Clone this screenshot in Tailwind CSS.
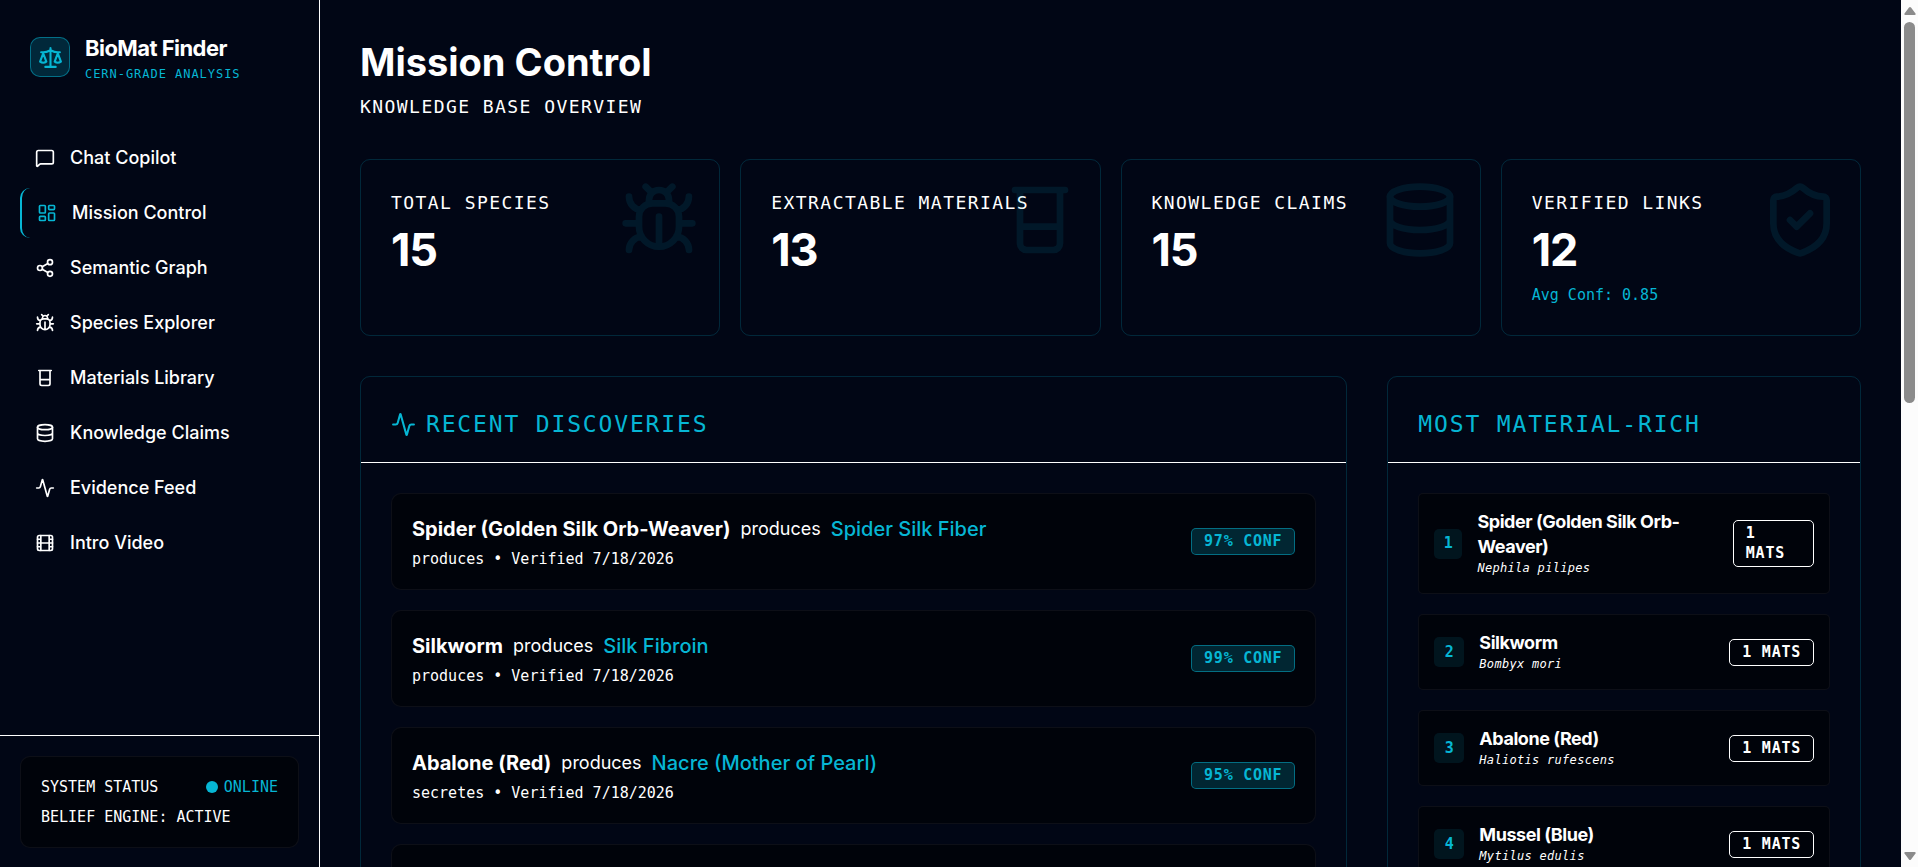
<!DOCTYPE html>
<html lang="en">
<head>
    <meta charset="UTF-8">
    <meta name="viewport" content="width=device-width, initial-scale=1.0">
    <title>BioMat Finder - Mission Control</title>
    <script src="https://cdn.jsdelivr.net/npm/@tailwindcss/browser@4"></script>
</head>
<body class="bg-[#010615] text-white font-['Inter',sans-serif] h-screen overflow-hidden flex">
    <!-- Icon sprite -->
    <svg class="hidden" aria-hidden="true">
        <symbol id="i-scale" viewBox="0 0 24 24"><path d="m16 16 3-8 3 8c-.87.65-1.92 1-3 1s-2.13-.35-3-1Z"/><path d="m2 16 3-8 3 8c-.87.65-1.92 1-3 1s-2.13-.35-3-1Z"/><path d="M7 21h10M12 3v18M3 7h2c2 0 5-1 7-2 2 1 5 2 7 2h2"/></symbol>
        <symbol id="i-chat" viewBox="0 0 24 24"><path d="M22 17a2 2 0 0 1-2 2H6.828a2 2 0 0 0-1.414.586l-2.202 2.202A.71.71 0 0 1 2 21.286V5a2 2 0 0 1 2-2h16a2 2 0 0 1 2 2z"/></symbol>
        <symbol id="i-dashboard" viewBox="0 0 24 24"><rect width="7" height="9" x="3" y="3" rx="1"/><rect width="7" height="5" x="14" y="3" rx="1"/><rect width="7" height="9" x="14" y="12" rx="1"/><rect width="7" height="5" x="3" y="16" rx="1"/></symbol>
        <symbol id="i-share" viewBox="0 0 24 24"><circle cx="18" cy="5" r="3"/><circle cx="6" cy="12" r="3"/><circle cx="18" cy="19" r="3"/><path d="m8.59 13.51 6.83 3.98M15.41 6.51l-6.82 3.98"/></symbol>
        <symbol id="i-bug" viewBox="0 0 24 24"><path d="m8 2 1.88 1.88M14.12 3.88 16 2M9 7.13v-1a3.003 3.003 0 1 1 6 0v1"/><path d="M12 20c-3.3 0-6-2.7-6-6v-3a4 4 0 0 1 4-4h4a4 4 0 0 1 4 4v3c0 3.3-2.7 6-6 6M12 20v-9M6.53 9C4.6 8.8 3 7.1 3 5M6 13H2M3 21c0-2.1 1.7-3.9 3.8-4M20.97 5c0 2.1-1.6 3.8-3.5 4M22 13h-4M17.2 17c2.1.1 3.8 1.9 3.8 4"/></symbol>
        <symbol id="i-beaker" viewBox="0 0 24 24"><path d="M4.5 3h15M6 3v16a2 2 0 0 0 2 2h8a2 2 0 0 0 2-2V3M6 14h12"/></symbol>
        <symbol id="i-database" viewBox="0 0 24 24"><ellipse cx="12" cy="5" rx="9" ry="3"/><path d="M3 5v14a9 3 0 0 0 18 0V5M3 12a9 3 0 0 0 18 0"/></symbol>
        <symbol id="i-activity" viewBox="0 0 24 24"><path d="M22 12h-2.48a2 2 0 0 0-1.93 1.46l-2.35 8.36a.25.25 0 0 1-.48 0L9.24 2.18a.25.25 0 0 0-.48 0l-2.35 8.36A2 2 0 0 1 4.49 12H2"/></symbol>
        <symbol id="i-film" viewBox="0 0 24 24"><rect width="18" height="18" x="3" y="3" rx="2"/><path d="M7 3v18M3 7.5h4M3 12h18M3 16.5h4M17 3v18M17 7.5h4M17 16.5h4"/></symbol>
        <symbol id="i-shield" viewBox="0 0 24 24"><path d="M20 13c0 5-3.5 7.5-7.66 8.95a1 1 0 0 1-.67-.01C7.5 20.5 4 18 4 13V6a1 1 0 0 1 1-1c2 0 4.5-1.2 6.24-2.72a1.17 1.17 0 0 1 1.52 0C14.51 3.81 17 5 19 5a1 1 0 0 1 1 1z"/><path d="m9 12 2 2 4-4"/></symbol>
    </svg>

    <!-- Sidebar -->
    <aside class="w-80 shrink-0 border-r border-white flex flex-col">
        <div class="flex items-center gap-[15px] px-[30px] pt-[30px]">
            <div class="size-10 rounded-[10px] bg-[#06b6d4]/20 border border-[#06b6d4]/50 text-[#06b6d4] flex items-center justify-center">
                <svg class="size-[25px] fill-none stroke-current stroke-2 [stroke-linecap:round] [stroke-linejoin:round]"><use href="#i-scale"/></svg>
            </div>
            <div class="pt-0.5">
                <div class="text-[22px] leading-8 font-bold tracking-tight">BioMat Finder</div>
                <div class="font-['DejaVu_Sans_Mono',monospace] text-xs leading-5 tracking-[0.08em] text-[#06b6d4]">CERN-GRADE ANALYSIS</div>
            </div>
        </div>

        <nav id="nav" class="flex-1 mt-[49px] px-5 space-y-[5px] text-lg font-medium"></nav>

        <div class="border-t border-white px-5 pt-5 pb-[19px]">
            <div class="bg-black/50 border border-white/5 rounded-[10px] p-5 space-y-2.5 font-['DejaVu_Sans_Mono',monospace] text-[15px] leading-5">
                <div class="flex items-center justify-between">
                    <span>SYSTEM STATUS</span>
                    <span class="flex items-center gap-1.5 text-[#06b6d4]">
                        <span class="size-3 rounded-full bg-[#06b6d4]"></span>ONLINE
                    </span>
                </div>
                <div>BELIEF ENGINE: ACTIVE</div>
            </div>
        </div>
    </aside>

    <!-- Main content -->
    <main class="flex-1 min-w-0 overflow-hidden p-10">
        <header class="mb-10">
            <h1 class="text-[38px] leading-11 font-bold">Mission Control</h1>
            <p class="mt-2.5 font-['DejaVu_Sans_Mono',monospace] text-lg leading-[25px] tracking-[0.08em]">KNOWLEDGE BASE OVERVIEW</p>
        </header>

        <section id="stats" class="grid grid-cols-4 gap-5 mb-10"></section>

        <div class="grid grid-cols-3 gap-10">
            <section class="col-span-2 border border-[#06b6d4]/20 rounded-[10px]">
                <h2 class="flex items-center gap-2.5 px-[30px] pt-[30px] pb-5 border-b border-white font-['DejaVu_Sans_Mono',monospace] text-[23px] leading-[35px] tracking-[0.08em] text-[#06b6d4]">
                    <svg class="size-[25px] fill-none stroke-current stroke-2 [stroke-linecap:round] [stroke-linejoin:round]"><use href="#i-activity"/></svg>
                    RECENT DISCOVERIES
                </h2>
                <div id="discoveries" class="p-[30px] space-y-5"></div>
            </section>

            <section class="border border-[#06b6d4]/20 rounded-[10px]">
                <h2 class="px-[30px] pt-[30px] pb-5 border-b border-white font-['DejaVu_Sans_Mono',monospace] text-[23px] leading-[35px] tracking-[0.08em] text-[#06b6d4]">MOST MATERIAL-RICH</h2>
                <div id="rich" class="p-[30px] space-y-5"></div>
            </section>
        </div>
    </main>

    <!-- Scroll track -->
    <div class="w-[17px] shrink-0 bg-[#fcfcfc] flex flex-col items-center justify-between py-1.5" aria-hidden="true">
        <svg class="w-3 h-2.5 fill-[#8b8b8b]" viewBox="0 0 12 10"><path d="M5 1.5q1-1.2 2 0l4.5 6q.6 1.500-1 1.500h-9q-1.600 0-1-1.500z"/></svg>
        <div class="w-[11px] flex-1 mt-1.5 mb-[448px] rounded-full bg-[#8b8b8b]"></div>
        <svg class="w-3 h-2.5 fill-[#8b8b8b] rotate-180" viewBox="0 0 12 10"><path d="M5 1.5q1-1.2 2 0l4.5 6q.6 1.500-1 1.500h-9q-1.600 0-1-1.500z"/></svg>
    </div>

    <script>
        const navItems = [
            ['chat', 'Chat Copilot'],
            ['dashboard', 'Mission Control'],
            ['share', 'Semantic Graph'],
            ['bug', 'Species Explorer'],
            ['beaker', 'Materials Library'],
            ['database', 'Knowledge Claims'],
            ['activity', 'Evidence Feed'],
            ['film', 'Intro Video']
        ]
        const stats = [
            { label: 'TOTAL SPECIES', value: 15, icon: 'bug' },
            { label: 'EXTRACTABLE MATERIALS', value: 13, icon: 'beaker' },
            { label: 'KNOWLEDGE CLAIMS', value: 15, icon: 'database' },
            { label: 'VERIFIED LINKS', value: 12, icon: 'shield', note: 'Avg Conf: 0.85' }
        ]
        const discoveries = [
            { species: 'Spider (Golden Silk Orb-Weaver)', material: 'Spider Silk Fiber', relation: 'produces', conf: 97 },
            { species: 'Silkworm', material: 'Silk Fibroin', relation: 'produces', conf: 99 },
            { species: 'Abalone (Red)', material: 'Nacre (Mother of Pearl)', relation: 'secretes', conf: 95 },
            { species: 'Mussel (Blue)', material: 'Byssal Threads', relation: 'secretes', conf: 94 }
        ]
        const rich = [
            ['Spider (Golden Silk Orb-Weaver)', 'Nephila pilipes'],
            ['Silkworm', 'Bombyx mori'],
            ['Abalone (Red)', 'Haliotis rufescens'],
            ['Mussel (Blue)', 'Mytilus edulis']
        ]

        function icon(name, cls) {
            return `<svg class="${cls} shrink-0 fill-none stroke-current stroke-2 [stroke-linecap:round] [stroke-linejoin:round]"><use href="#i-${name}"/></svg>`
        }

        document.getElementById('nav').innerHTML = navItems.map(([name, label]) => {
            const active = name === 'dashboard'
            return `
                <a href="#${name}" class="flex items-center gap-[15px] h-[50px] px-[15px] rounded-[10px]
                       ${active ? 'border-l-2 border-[#06b6d4]' : ''}">
                    ${icon(name, active ? 'size-5 text-[#06b6d4]' : 'size-5')}
                    ${label}
                </a>`
        }).join('')

        document.getElementById('stats').innerHTML = stats.map(s => `
            <div class="relative border border-[#06b6d4]/20 rounded-[10px] p-[30px]">
                <div class="font-['DejaVu_Sans_Mono',monospace] text-lg leading-[26px] tracking-[0.08em] whitespace-nowrap">${s.label}</div>
                <div class="mt-[11px] text-[45px] leading-[45px] font-bold tracking-tight">${s.value}</div>
                ${s.note ? `<div class="mt-[13px] font-['DejaVu_Sans_Mono',monospace] text-[15px] leading-5 text-[#06b6d4]">${s.note}</div>` : ''}
                ${icon(s.icon, 'absolute top-5 right-5 size-20 text-[#06b6d4] opacity-10')}
            </div>
        `).join('')

        document.getElementById('discoveries').innerHTML = discoveries.map(d => `
            <div class="flex items-center justify-between bg-black/50 border border-white/5 rounded-[10px] p-5">
                <div>
                    <div class="flex items-center gap-2.5 leading-[30px]">
                        <span class="text-xl leading-[30px] font-bold">${d.species}</span>
                        <span class="text-lg leading-[30px]">produces</span>
                        <span class="text-xl leading-[30px] font-medium text-[#06b6d4]">${d.material}</span>
                    </div>
                    <div class="mt-[5px] font-['DejaVu_Sans_Mono',monospace] text-[15px] leading-5">${d.relation} • Verified 7/18/2026</div>
                </div>
                <span class="px-3 pt-0.5 pb-[3px] rounded-[5px] bg-[#06b6d4]/20 border border-[#06b6d4]/50 text-[#06b6d4]
                       font-['DejaVu_Sans_Mono',monospace] text-[15px] leading-5 font-bold tracking-wider">${d.conf}% CONF</span>
            </div>
        `).join('')

        document.getElementById('rich').innerHTML = rich.map(([name, latin], i) => `
            <div class="flex items-center justify-between bg-black/50 border border-white/5 rounded-[5px] p-[15px]">
                <div class="flex items-center gap-[15px]">
                    <span class="w-[30px] h-[30px] flex items-center justify-center rounded-[5px] bg-[#06b6d4]/10 text-[#06b6d4]
                           font-['DejaVu_Sans_Mono',monospace] text-[15px] font-bold">${i + 1}</span>
                    <div>
                        <div class="text-lg leading-[25px] font-bold tracking-tight">${name}</div>
                        <div class="font-['DejaVu_Sans_Mono',monospace] text-xs leading-[19px] tracking-wide italic">${latin}</div>
                    </div>
                </div>
                <span class="px-3 pt-0.5 pb-[3px] rounded-[5px] border border-white
                       font-['DejaVu_Sans_Mono',monospace] text-[15px] leading-5 font-bold tracking-wider">1 MATS</span>
            </div>
        `).join('')
    </script>
</body>
</html>
